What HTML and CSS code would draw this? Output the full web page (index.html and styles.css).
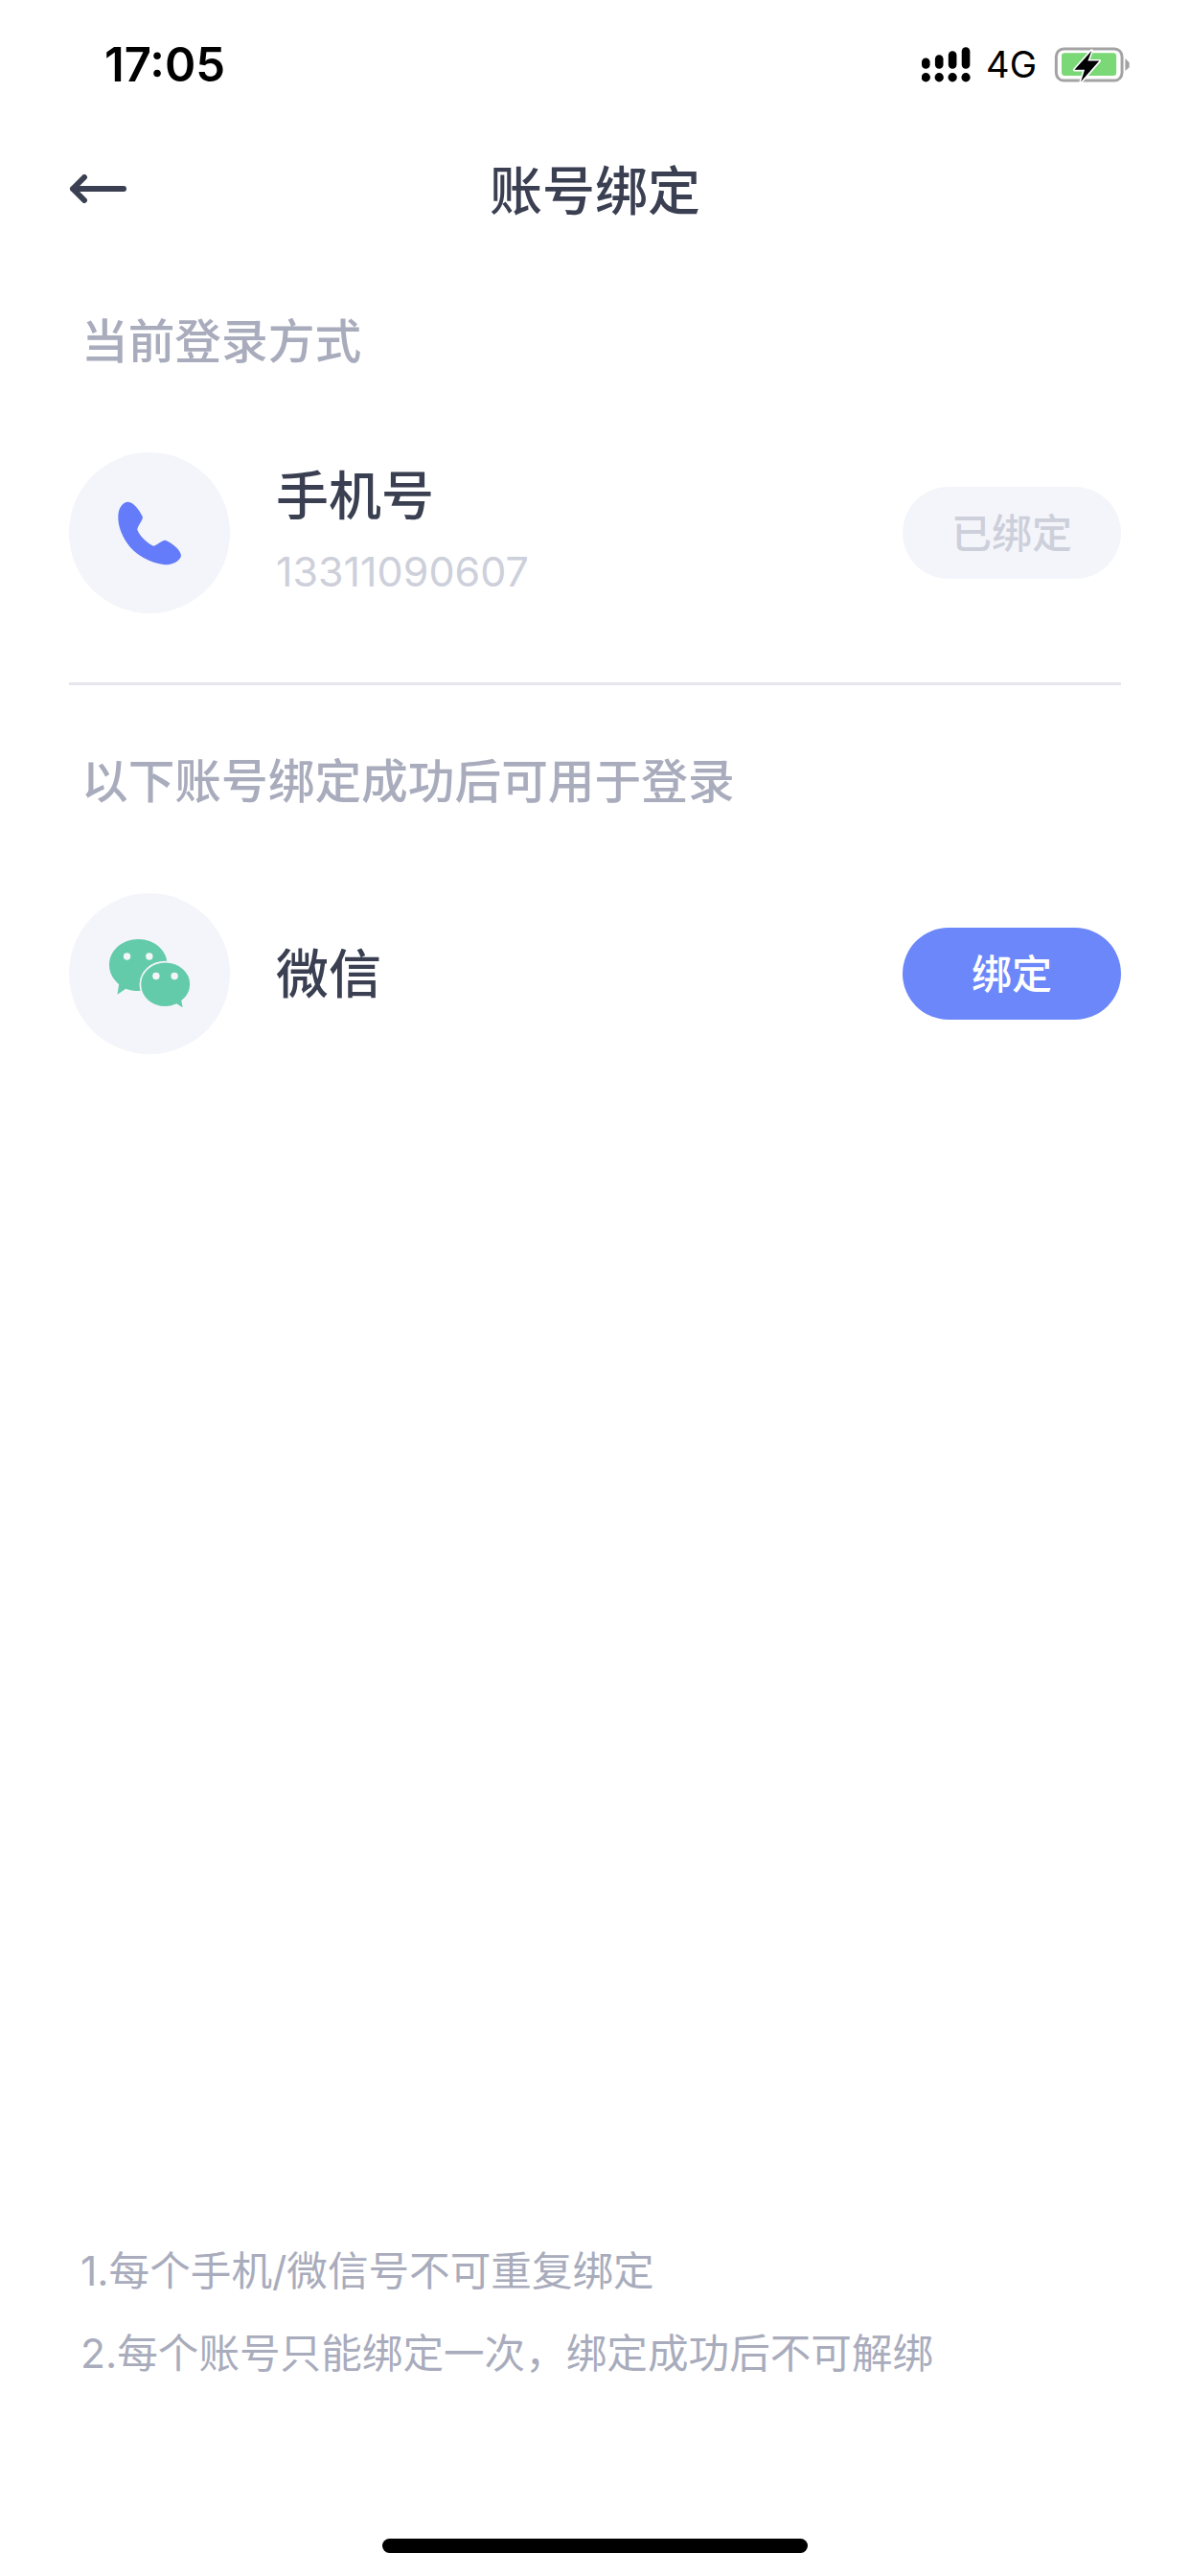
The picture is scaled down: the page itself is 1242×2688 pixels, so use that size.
FILE: index.html
```html
<!DOCTYPE html>
<html lang="zh-CN">
<head>
  <meta charset="UTF-8" />
  <meta name="viewport" content="width=device-width, initial-scale=1" />
  <title>账号绑定</title>
  <link rel="stylesheet" href="styles.css">
</head>
<body>
  <div class="page">
    <!-- Status bar -->
    <div class="status-bar">
      <span class="time">17:05</span>
      <div class="status-icons">
        <svg class="signal" viewBox="60 54 154 110" aria-hidden="true">
          <rect x="60" y="88" width="26" height="34" rx="13" />
          <rect x="102" y="78" width="26" height="44" rx="13" />
          <rect x="144" y="66" width="26" height="56" rx="13" />
          <rect x="186" y="54" width="26" height="68" rx="13" />
          <circle cx="73" cy="149" r="14" />
          <circle cx="115" cy="149" r="14" />
          <circle cx="157" cy="149" r="14" />
          <circle cx="199" cy="149" r="14" />
        </svg>
        <span class="network">4G</span>
        <svg class="battery" viewBox="474 56 240 112" aria-hidden="true">
          <rect x="480" y="62" width="208" height="100" rx="24" fill="none" stroke="#a3a3a3" stroke-width="9" />
          <rect x="497" y="75" width="173" height="72" rx="10" fill="#7ad877" />
          <path d="M698 92 L711 105 V120 L698 132 Z" fill="#a3a3a3" />
          <path d="M592 68 L538 128 H570 L558 166 L616 100 H580 Z" fill="#000" stroke="#fff" stroke-width="10" paint-order="stroke" stroke-linejoin="round" />
        </svg>
      </div>
    </div>

    <!-- Nav -->
    <header class="nav">
      <svg class="back" viewBox="0 0 61 30" aria-hidden="true">
        <path d="M57 15 H4 M16 3 L4 15 L16 27" fill="none" stroke="#3a3f51" stroke-width="6" stroke-linecap="round" stroke-linejoin="round" />
      </svg>
      <h1>账号绑定</h1>
    </header>

    <main class="content">
      <p class="section-label first">当前登录方式</p>
      <div class="account-row">
        <div class="avatar">
          <svg class="icon-phone" viewBox="218 216 202 202" aria-hidden="true">
            <path d="M250 218 C268 218 286 245 296 265 C298 275 282 290 279 305 C285 325 315 352 330 357 C342 355 355 340 367 339 C385 345 418 370 417 388 C412 408 385 417 365 416 C320 410 270 385 245 345 C230 320 218 295 219 262 C220 235 235 218 250 218 Z" fill="#647cf9" />
          </svg>
        </div>
        <div class="account-info with-sub">
          <div class="account-name">手机号</div>
          <div class="account-sub">13311090607</div>
        </div>
        <button class="pill pill-done">已绑定</button>
      </div>

      <hr class="divider" />

      <p class="section-label">以下账号绑定成功后可用于登录</p>
      <div class="account-row">
        <div class="avatar">
          <svg class="icon-wechat" viewBox="186 204 264 228" aria-hidden="true">
            <path d="M282 210 C332 210 372 245 372 290 C372 335 332 370 282 370 C268 370 255 367 243 363 L217 381 L222 350 C205 335 192 315 192 290 C192 245 232 210 282 210 Z" fill="#64cbaa" />
            <path d="M366 280 C410 280 444 311 444 350 C444 371 434 388 418 401 L423 426 L400 412 C389 417 378 420 366 420 C322 420 288 389 288 350 C288 311 322 280 366 280 Z" fill="#64cbaa" stroke="#f4f5fa" stroke-width="5" />
            <circle cx="247" cy="263" r="11" fill="#f4f5fa" />
            <circle cx="316" cy="263" r="11" fill="#f4f5fa" />
            <circle cx="337" cy="324" r="11" fill="#f4f5fa" />
            <circle cx="394" cy="324" r="11" fill="#f4f5fa" />
          </svg>
        </div>
        <div class="account-info">
          <div class="account-name">微信</div>
        </div>
        <button class="pill pill-bind">绑定</button>
      </div>
    </main>

    <!-- Notes -->
    <footer class="notes">
      <p>1.每个手机/微信号不可重复绑定</p>
      <p>2.每个账号只能绑定一次，绑定成功后不可解绑</p>
    </footer>

    <div class="home-bar"><span></span></div>
  </div>
</body>
</html>
```

FILE: styles.css
```css
* {
  box-sizing: border-box;
}

body {
  margin: 0;
  background: #fff;
  font-family: Inter, "Noto Sans CJK SC", sans-serif;
  color: #3a3f51;
}

.page {
  display: flex;
  flex-direction: column;
  width: 1242px;
  height: 2688px;
  overflow: hidden;
}

.status-bar {
  display: flex;
  justify-content: space-between;
  align-items: center;
  height: 136px;
  padding: 0 62px 2px 109px;
}

.time {
  font-size: 49px;
  font-weight: 600;
  color: #000;
}

.status-icons {
  display: flex;
  align-items: center;
}

.signal {
  width: 51px;
  height: 37px;
}

.network {
  margin: 0 18px 0 16px;
  font-size: 38px;
  font-weight: 400;
  color: #000;
}

.battery {
  width: 80px;
  height: 37px;
}

.nav {
  position: relative;
  display: flex;
  justify-content: center;
  align-items: center;
  height: 120px;
  padding-bottom: 3px;
}

.nav h1 {
  margin: 0;
  font-size: 55px;
  font-weight: 500;
  color: #3a3f51;
}

.back {
  position: absolute;
  left: 72px;
  top: 46px;
  width: 61px;
  height: 30px;
}

.content {
  padding: 0 72px;
}

.section-label {
  margin: 0 0 83px 13px;
  font-size: 48.7px;
  font-weight: 500;
  line-height: 66px;
  color: #a9acbc;
}

.section-label.first {
  margin-top: 68px;
  margin-bottom: 82px;
}

.account-row {
  display: flex;
  align-items: center;
}

.avatar {
  display: flex;
  justify-content: center;
  align-items: center;
  flex: none;
  width: 168px;
  height: 168px;
  border-radius: 50%;
  background: #f4f5fa;
}

.icon-phone {
  width: 67px;
  height: 67px;
}

.icon-wechat {
  width: 89px;
  height: 77px;
}

.account-info {
  flex: 1;
  margin-left: 48px;
}

.account-info.with-sub {
  padding-bottom: 8px;
}

.account-name {
  font-size: 55px;
  line-height: 74px;
  font-weight: 500;
}

.account-sub {
  margin-top: 14px;
  font-size: 43px;
  line-height: 56px;
  color: #cdd0da;
}

.pill {
  width: 228px;
  height: 96px;
  padding: 0 0 5px;
  border: 0;
  border-radius: 48px;
  font-family: inherit;
  font-size: 42px;
  font-weight: 500;
}

.pill-done {
  background: #f4f5fa;
  color: #cdd0da;
}

.pill-bind {
  background: #6c87fa;
  color: #fff;
}

.divider {
  height: 3px;
  margin: 72px 0 68px;
  border: 0;
  background: #e6e6ec;
}

.notes {
  margin-top: auto;
  padding-left: 84px;
  font-size: 42.6px;
  line-height: 86px;
  color: #a9acbc;
}

.notes p {
  margin: 0;
}

.home-bar {
  display: flex;
  justify-content: center;
  align-items: flex-end;
  height: 189px;
  padding-bottom: 24px;
}

.home-bar span {
  width: 444px;
  height: 15px;
  border-radius: 8px;
  background: #000;
}
```
